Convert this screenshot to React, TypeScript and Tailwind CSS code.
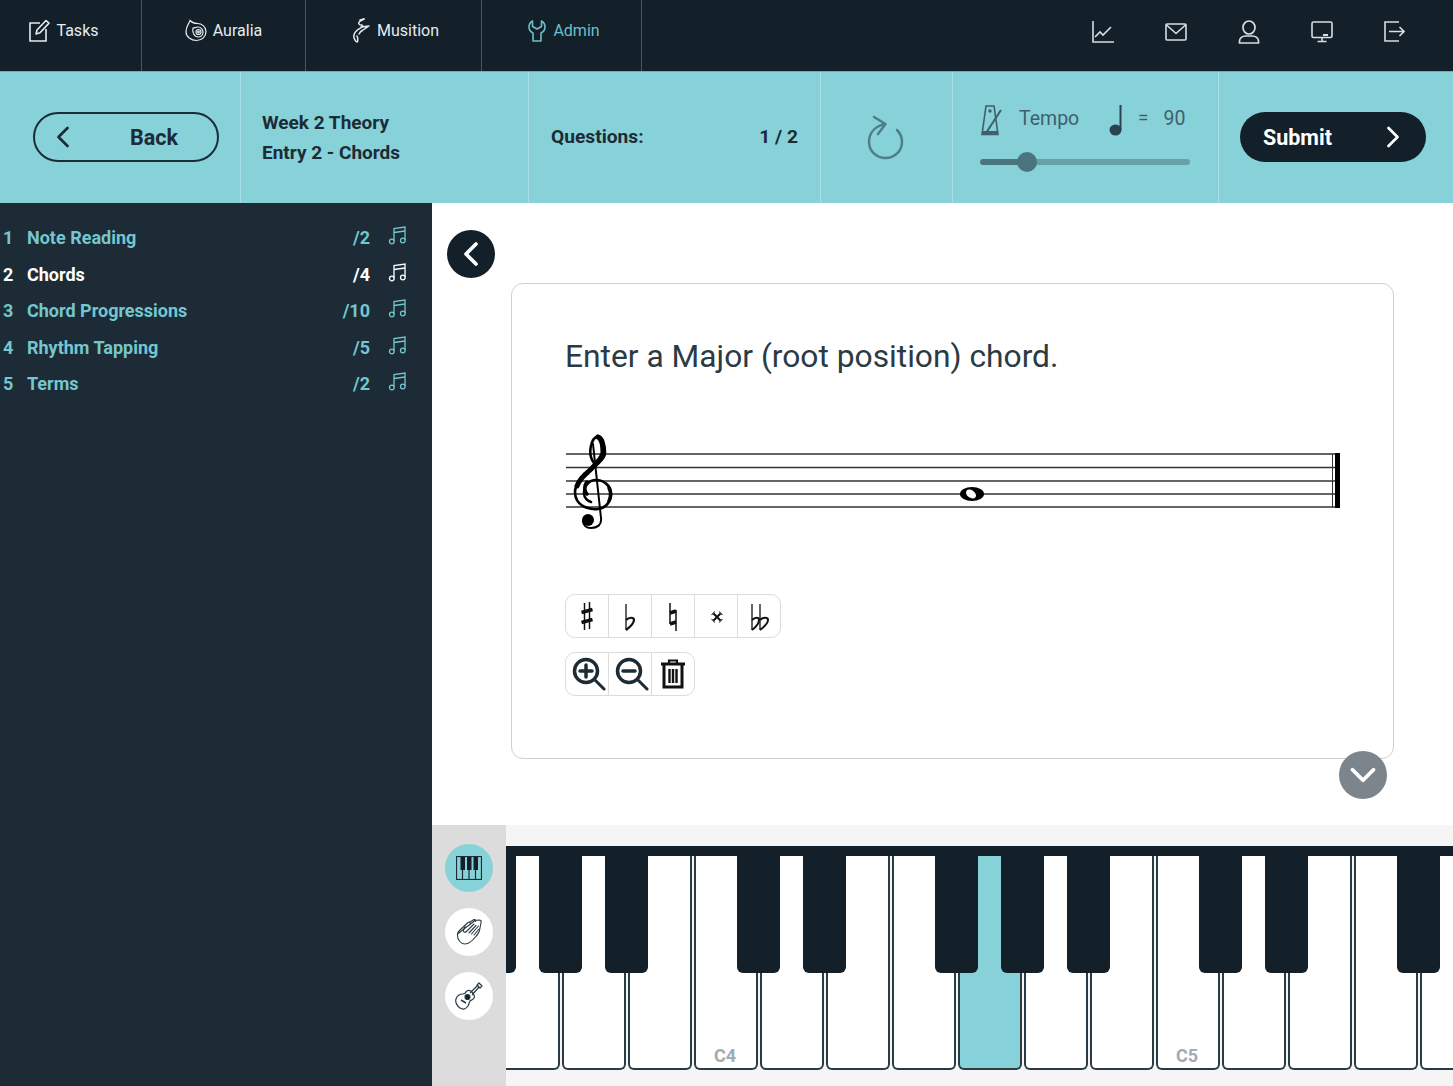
import { ChevronLeft, ChevronRight, ChevronDown } from 'lucide-react';

const navItems = [
  { label: 'Tasks', cell: 'w-[142px] pr-[14px]', gap: 'gap-[6px]', color: 'text-[#e6ecef]', icon: <TasksIcon /> },
  { label: 'Auralia', cell: 'w-[164px]', gap: 'gap-[6px]', color: 'text-[#e6ecef]', icon: <ShellIcon /> },
  { label: 'Musition', cell: 'w-[176px] pl-[4px]', gap: 'gap-[7px]', color: 'text-[#e6ecef]', icon: <FigureIcon /> },
  { label: 'Admin', cell: 'w-[160px] pl-[5px]', gap: 'gap-[7px]', color: 'text-[#6cc0ca]', icon: <WrenchIcon /> },
];

const sections = [
  { n: 1, name: 'Note Reading', score: '/2' },
  { n: 2, name: 'Chords', score: '/4', active: true },
  { n: 3, name: 'Chord Progressions', score: '/10' },
  { n: 4, name: 'Rhythm Tapping', score: '/5' },
  { n: 5, name: 'Terms', score: '/2' },
];

// white keys, starting off-screen to the left of the visible area
const keys = [
  { black: true }, { black: true }, { black: true }, {},
  { black: true, label: 'C4' }, { black: true }, {},
  { black: true }, { black: true, on: true }, { black: true }, {},
  { black: true, label: 'C5' }, { black: true }, {},
  { black: true }, { black: true },
];

function TasksIcon() {
  return (
    <svg width="22" height="23" viewBox="0 0 22 23" fill="none" stroke="currentColor" strokeWidth="1.6">
      <path d="M11 4H1v18h16V10" />
      <path d="M7 15l1-4 9-9.5 3 2.6-9 9.6z" strokeLinejoin="round" />
    </svg>
  );
}

function ShellIcon() {
  return (
    <svg width="22" height="23" viewBox="0 0 22 23" fill="none" stroke="currentColor" strokeWidth="1.2">
      <path d="M5 1.500C4.500 4 1 7 1 12.500 1 18 6 21.500 11.500 21.500 17 21.500 21 17.500 21 12.500 21 7.500 16.500 4.500 12.500 4.500 9.500 4.500 7 3.500 5 1.500z" />
      <path d="M8 9c-1 4 1 9 5.500 9 3 0 4.500-2.500 4.500-5s-2-5-5-5c-2 0-3.500 1-5 1z" />
      <circle cx="13.500" cy="13" r="2.500" />
      <circle cx="13.500" cy="13" r="0.800" />
    </svg>
  );
}

function FigureIcon() {
  return (
    <svg width="18" height="25" viewBox="0 0 18 25" fill="none" stroke="currentColor" strokeWidth="1.500" strokeLinecap="round" strokeLinejoin="round">
      <path d="M12 1C8 3 6 4 7 6c1 2 5 0 3 3-2 2-7 3-8 8-1 3 2 7 3 7 1 0 1-4 0-6" />
      <path d="M9 9l8-1-6 4c-2 1-3 2-4 4" />
      <path d="M12 1l-4 1" />
    </svg>
  );
}

function WrenchIcon() {
  return (
    <svg width="18" height="22" viewBox="0 0 18 22" fill="none" stroke="currentColor" strokeWidth="1.600" strokeLinejoin="round">
      <path d="M4.500 1C2 2.500 1 4.500 1 7c0 3 2 5 4 6v8h8v-8c2-1 4-3 4-6 0-2.500-1-4.500-3.500-6v5.500L9 9 4.500 6.500z" />
    </svg>
  );
}

function ChartIcon() {
  return (
    <svg width="22" height="22" viewBox="0 0 22 22" fill="none" stroke="currentColor" strokeWidth="1.600">
      <path d="M1 0v21h21" />
      <path d="M3 16l5-5 3 3 8-8" />
    </svg>
  );
}

function MailIcon() {
  return (
    <svg width="22" height="18" viewBox="0 0 22 18" fill="none" stroke="currentColor" strokeWidth="1.600" strokeLinejoin="round">
      <rect x="1" y="1" width="20" height="16" rx="1" />
      <path d="M1 1.500l10 9 10-9" />
    </svg>
  );
}

function UserIcon() {
  return (
    <svg width="22" height="24" viewBox="0 0 22 24" fill="none" stroke="currentColor" strokeWidth="1.700">
      <ellipse cx="11" cy="7.500" rx="6" ry="6.500" />
      <path d="M1.500 23v-2c0-3 3-5 6-5h7c3 0 6 2 6 5v2z" strokeLinejoin="round" />
    </svg>
  );
}

function MonitorIcon() {
  return (
    <svg width="22" height="22" viewBox="0 0 22 22" fill="none" stroke="currentColor" strokeWidth="1.600">
      <rect x="1" y="1" width="20" height="15.500" rx="1.500" />
      <path d="M11 16.500V20M6.500 20.500h9" />
      <path d="M12 14h5" strokeWidth="2" />
    </svg>
  );
}

function LogoutIcon() {
  return (
    <svg width="21" height="21" viewBox="0 0 21 21" fill="none" stroke="currentColor" strokeWidth="1.600">
      <path d="M15 1H1v19h14" />
      <path d="M5 10.500h15M15.500 6l4.500 4.500-4.500 4.500" />
    </svg>
  );
}

function MetronomeIcon() {
  return (
    <svg width="22" height="31" viewBox="0 0 22 31" fill="none" stroke="#3f5f6b" strokeWidth="1.600">
      <path d="M5 1h8l4 28.500H1z" strokeLinejoin="miter" />
      <path d="M5 28L20 5" strokeWidth="2" />
      <circle cx="9" cy="6" r="0.900" fill="#3f5f6b" />
      <path d="M2 27.500h14" strokeWidth="3" />
    </svg>
  );
}

function QuarterNote() {
  return (
    <svg width="14" height="31" viewBox="0 0 14 31" fill="#2b4350">
      <ellipse cx="6.500" cy="25" rx="6" ry="5.500" />
      <rect x="10.500" y="0" width="2" height="25" />
    </svg>
  );
}

function ReloadIcon() {
  return (
    <svg width="38" height="46" viewBox="0 0 38 46" fill="none" stroke="#4e7f88" strokeWidth="2.500" strokeLinecap="round" strokeLinejoin="round">
      <path d="M18 9C9 11 2 17 2 27c0 9 7.500 16 16.500 16S35 36 35 27c0-5-2-9-5-12" />
      <path d="M7 2l11.500 7L11 19" />
    </svg>
  );
}

function NotesIcon() {
  return (
    <svg width="18" height="19" viewBox="0 0 18 19" fill="none" stroke="currentColor" strokeWidth="1.300">
      <path d="M6 15V2.500L17 1v13" />
      <path d="M6 6.500l11-1.500" />
      <circle cx="3.800" cy="15.500" r="2.300" />
      <circle cx="14.800" cy="14.500" r="2.300" />
    </svg>
  );
}

function Staff() {
  return (
    <svg width="776" height="105" viewBox="0 0 776 105" fill="none" className="block">
      {[24, 37.5, 51, 64, 77].map((y) => (
        <line key={y} x1="1" x2="771" y1={y} y2={y} stroke="#333" strokeWidth="1.400" />
      ))}
      {/* treble clef */}
      <g stroke="#000" strokeLinecap="round">
        <path d="M29 33C22 24 26 8 33 6c5 0 7 10 7 17C40 34 10 46 10 62c0 14 14 18 23 17 9-1 13-9 13-15 0-9-8-14-15-14-7 0-12 6-12 13 0 5 4 8 7 9" strokeWidth="2.600" />
        <path d="M33 7c4 2 5 9 5 16-1 6-8 12-14 18M12 56c2-5 6-10 11-14" strokeWidth="5" />
        <path d="M44 58c2 4 2 9 0 13M22 52c-3 3-3 9 0 12" strokeWidth="3.500" />
        <path d="M28 14l8 74c1 7-4 10-10 10-5 0-8-3-8-7" strokeWidth="2" />
      </g>
      <circle cx="23" cy="90" r="6" fill="#000" />
      {/* whole note */}
      <ellipse cx="407" cy="64" rx="12" ry="7" fill="#000" />
      <ellipse cx="406" cy="64" rx="5.500" ry="3.800" fill="#fff" transform="rotate(35 406 64)" />
      {/* end barline */}
      <line x1="767.500" x2="767.500" y1="24" y2="77" stroke="#333" />
      <rect x="770" y="23" width="5" height="55" fill="#000" />
    </svg>
  );
}

function Sharp() {
  return (
    <svg width="14" height="30" viewBox="0 0 14 30" stroke="#111" fill="none">
      <path d="M4.500 2v27M9.500 1v27" strokeWidth="1.500" />
      <path d="M1.500 11.500l11-3M1.500 21.500l11-3" strokeWidth="3.500" />
    </svg>
  );
}

function Flat() {
  return (
    <svg width="12" height="28" viewBox="0 0 12 28" stroke="#111" fill="none" className="mt-[2px]">
      <path d="M2 1v26" strokeWidth="1.300" />
      <path d="M2 17c3-3 8-3 8 0 0 3-4 7-8 10" strokeWidth="2.200" />
    </svg>
  );
}

function Natural() {
  return (
    <svg width="10" height="30" viewBox="0 0 10 30" stroke="#111" fill="none" className="mt-[1px]">
      <path d="M2 1v21M8 8v21" strokeWidth="1.500" />
      <path d="M2 11l6-2M2 22l6-2" strokeWidth="3.500" />
    </svg>
  );
}

function DoubleSharp() {
  return (
    <svg width="14" height="14" viewBox="0 0 12 12" stroke="#111" fill="none" className="ml-[1px] mt-[2px]">
      <path d="M3 3l6 6M9 3l-6 6" strokeWidth="1.800" />
      <path d="M2.500 2.500l.5.500M9.500 2.500L9 3M2.500 9.500L3 9M9.500 9.500L9 9" strokeWidth="4" />
    </svg>
  );
}

function DoubleFlat() {
  return (
    <svg width="20" height="28" viewBox="0 0 20 28" stroke="#111" fill="none" className="ml-[2px] mt-[2px]">
      <path d="M2 1v26M10 1v26" strokeWidth="1.300" />
      <path d="M2 17c3-3 7-3 7 0 0 3-3 7-7 10M10 17c3-3 8-3 8 0 0 3-4 7-8 10" strokeWidth="2" />
    </svg>
  );
}

function ZoomInIcon({ minus }: { minus?: boolean }) {
  return (
    <svg width="34" height="34" viewBox="0 0 34 34" fill="none" stroke="#1c2b35" strokeLinecap="round" className="ml-[3px]">
      <circle cx="14" cy="14" r="11.500" strokeWidth="3.500" />
      <path d="M8 14h12" strokeWidth="3.500" />
      {!minus && <path d="M14 8v12" strokeWidth="3.500" />}
      <path d="M23 23l9 9" strokeWidth="3" />
    </svg>
  );
}

function TrashIcon() {
  return (
    <svg width="24" height="30" viewBox="0 0 24 30" fill="none" stroke="#111">
      <path d="M8 4V1.500h8V4" strokeWidth="2.200" />
      <path d="M0 5h24" strokeWidth="3" />
      <path d="M3 6v22h18V6" strokeWidth="3" />
      <path d="M8.500 10v14M12 10v14M15.500 10v14" strokeWidth="2.400" />
    </svg>
  );
}

function PianoIcon() {
  return (
    <svg width="26" height="24" viewBox="0 0 26 24" fill="none" stroke="#1c2b35">
      <rect x="0.500" y="0.500" width="25" height="23" strokeWidth="1.200" />
      <path d="M6.500 14v9M13 14v9M19.500 14v9" strokeWidth="1.200" />
      <path d="M4.500 1H9v13H4.500zM11 1h4.500v13H11zM17.500 1H22v13h-4.500z" fill="#131f29" stroke="none" />
    </svg>
  );
}

function HandsIcon() {
  return (
    <svg width="26" height="26" viewBox="0 0 26 26" fill="none" stroke="#2b3b44" strokeWidth="1.100" strokeLinejoin="round" strokeLinecap="round">
      <path d="M1.500 15c0-2 1.500-3 3-4.500L12 3.500c1.500-1 3 .500 2 2M14 3l4-2.500c1.500 0 2 1 1.500 2M19 1.500l4-.5c2 0 2.500 1 2 2.500l-1.500 8c-.5 2-2 4-4 6.500-2.500 3-6 7-10.500 7C5 25 1 21 1.500 15z" />
      <path d="M9 7.500l-1.500 3.500c-.5 2 1 3 2.500 1.500M10 13L18 5M13 14l7-7.500M15.500 15L22.500 7M18 16l5-6" />
    </svg>
  );
}

function GuitarIcon() {
  return (
    <svg width="28" height="28" viewBox="0 0 28 28" fill="none" stroke="#2b3b44" strokeWidth="1.200" strokeLinejoin="round">
      <path d="M16 9c-2-1-4-1-5 1-1 1-1 2-3 2-3 0-6 2-7 5-1 3 1 7 4 9 3 2 6 1 8-2 1-2 1-3 2-5 1-1 3-1 4-3 1-1 0-4-3-7z" />
      <path d="M15 11L23 3M17 13l7-8" />
      <path d="M22 3l2-2 3 3-2 2z" />
      <circle cx="12.500" cy="15" r="2.500" fill="#131f29" />
      <path d="M6 18l5 3" strokeWidth="1.500" />
    </svg>
  );
}

export default function App() {
  return (
    <div className="flex h-[1086px] w-full flex-col overflow-hidden bg-white font-[Roboto,sans-serif]">
      {/* Top nav */}
      <nav className="flex h-[71px] shrink-0 items-center justify-between bg-[#131f29]">
        <div className="flex h-full">
          {navItems.map((item) => (
            <div key={item.label} className={`flex h-full items-center justify-center border-r border-[#4a565f] pb-[10px] ${item.gap} ${item.cell} ${item.color}`}>
              {item.icon}
              <span className="text-[16px] leading-none">{item.label}</span>
            </div>
          ))}
        </div>
        <div className="mb-[8px] mr-[22px] flex text-[#d8dee1]">
          <div className="flex h-[30px] w-[73px] items-center justify-center"><ChartIcon /></div>
          <div className="flex h-[30px] w-[73px] items-center justify-center"><MailIcon /></div>
          <div className="flex h-[30px] w-[73px] items-center justify-center"><UserIcon /></div>
          <div className="flex h-[30px] w-[73px] items-center justify-center"><MonitorIcon /></div>
          <div className="flex h-[30px] w-[73px] items-center justify-center"><LogoutIcon /></div>
        </div>
      </nav>

      {/* Quiz header */}
      <header className="flex h-[132px] shrink-0 border-t border-[#6aaeb8] bg-[#87d1d8] text-[#1c2b35]">
        <div className="flex w-[241px] items-center border-r border-[#a8e0e5] pb-[2px] pl-[33px]">
          <button className="flex h-[50px] w-[186px] items-center rounded-full border-2 border-[#1c2b35] pl-[10px]">
            <ChevronLeft size={36} strokeWidth={1.800} />
            <span className="ml-[49px] pt-[3px] text-[21.500px] font-bold">Back</span>
          </button>
        </div>
        <div className="flex w-[288px] flex-col justify-center border-r border-[#a8e0e5] pl-[21px] text-[19px] font-bold leading-[30px]">
          <div>Week 2 Theory</div>
          <div>Entry 2 - Chords</div>
        </div>
        <div className="flex w-[292px] items-center justify-between border-r border-[#a8e0e5] pl-[22px] pr-[22px] text-[19.200px] font-bold">
          <span>Questions:</span>
          <span>1 / 2</span>
        </div>
        <div className="flex w-[132px] items-center justify-center border-r border-[#a8e0e5] pr-[2px]">
          <ReloadIcon />
        </div>
        <div className="flex w-[266px] flex-col border-r border-[#a8e0e5] pl-[28px] pt-[32px]">
          <div className="flex h-[32px] items-center text-[19.500px] text-[#3f5f6b]">
            <MetronomeIcon />
            <span className="-mt-[3px] ml-[16px] w-[59px]">Tempo</span>
            <span className="ml-[31px]"><QuarterNote /></span>
            <span className="-mt-[3px] ml-[15px] text-[19px]">=</span>
            <span className="-mt-[3px] ml-[15px]">90</span>
          </div>
          <div className="relative -ml-[1px] mt-[20px] flex h-[12px] w-[210px] items-center">
            <div className="h-[6px] w-[38px] rounded-l-full bg-[#4a757f]" />
            <div className="ml-[12px] h-[6px] flex-1 rounded-r-full bg-[#66a0a9]" />
            <div className="absolute left-[37px] top-[-4px] h-[20px] w-[20px] rounded-full bg-[#4a757f]" />
          </div>
        </div>
        <div className="flex flex-1 items-center pb-[2px] pl-[21px]">
          <button className="flex h-[50px] w-[186px] items-center justify-between rounded-full bg-[#131f29] pl-[23px] pr-[15px] text-white">
            <span className="pt-[3px] text-[21.500px] font-bold">Submit</span>
            <ChevronRight size={36} strokeWidth={1.800} />
          </button>
        </div>
      </header>

      <div className="flex min-h-0 flex-1">
        {/* Section list */}
        <aside className="w-[432px] shrink-0 bg-[#1c2b35] pt-[16.500px]">
          {sections.map((s) => (
            <div key={s.n} className={`flex h-[36.500px] items-center pl-[3px] pr-[26px] text-[18px] font-bold ${s.active ? 'text-white' : 'text-[#74c6cf]'}`}>
              <span className="w-[24px]">{s.n}</span>
              <span className="flex-1">{s.name}</span>
              <span>{s.score}</span>
              <span className="-mt-[4px] ml-[18px]"><NotesIcon /></span>
            </div>
          ))}
        </aside>

        <div className="flex min-w-0 flex-1 flex-col">
          {/* Question */}
          <main className="h-[622px] shrink-0 pl-[15px] pt-[27px]">
            <button className="flex h-12 w-12 items-center justify-center rounded-full bg-[#131f29] text-white">
              <ChevronLeft size={40} strokeWidth={2.200} />
            </button>
            <section className="relative ml-[64px] mt-[5px] h-[475.500px] w-[883px] rounded-[12px] border border-[#cfcfcf] pl-[53px] pt-[53px]">
              <h1 className="text-[31.750px] font-normal leading-[40px] text-[#2b3b44]">Enter a Major (root position) chord.</h1>
              <div className="mt-[53px]"><Staff /></div>
              <div className="mt-[59px] flex h-[44px] w-[216px] rounded-[10px] border border-[#dcdcdc]">
                <div className="flex w-[43px] items-center justify-center border-r border-[#dcdcdc]"><Sharp /></div>
                <div className="flex w-[43px] items-center justify-center border-r border-[#dcdcdc]"><Flat /></div>
                <div className="flex w-[43px] items-center justify-center border-r border-[#dcdcdc]"><Natural /></div>
                <div className="flex w-[43px] items-center justify-center border-r border-[#dcdcdc]"><DoubleSharp /></div>
                <div className="flex flex-1 items-center justify-center"><DoubleFlat /></div>
              </div>
              <div className="mt-[14px] flex h-[44px] w-[130px] rounded-[10px] border border-[#dcdcdc]">
                <div className="flex w-[43px] items-center justify-center border-r border-[#dcdcdc]"><ZoomInIcon /></div>
                <div className="flex w-[43px] items-center justify-center border-r border-[#dcdcdc]"><ZoomInIcon minus /></div>
                <div className="flex flex-1 items-center justify-center"><TrashIcon /></div>
              </div>
              <button className="absolute -bottom-[41px] right-[6px] flex h-12 w-12 items-center justify-center rounded-full bg-[#7c858b] text-white">
                <ChevronDown size={42} strokeWidth={2.200} />
              </button>
            </section>
          </main>

          {/* Keyboard */}
          <div className="flex min-h-0 flex-1">
            <div className="flex w-[74px] shrink-0 flex-col items-center gap-4 bg-[#dcdcdc] pt-[19px]">
              <div className="flex h-12 w-12 items-center justify-center rounded-full bg-[#87d1d8]"><PianoIcon /></div>
              <div className="flex h-12 w-12 items-center justify-center rounded-full bg-white"><HandsIcon /></div>
              <div className="flex h-12 w-12 items-center justify-center rounded-full bg-white"><GuitarIcon /></div>
            </div>
            <div className="min-w-0 flex-1 bg-[#f5f5f5] pt-[21px]">
              <div className="h-[224px] overflow-hidden">
                <div className="h-[10px] bg-[#131f29]" />
                <div className="-ml-[76px] flex h-[214px] w-[1100px] gap-[2px]">
                  {keys.map((k, i) => (
                    <div key={i} className={`relative flex h-full w-[64px] shrink-0 items-end justify-center rounded-b-[6px] border-x-2 border-b-2 border-[#2b3b44] pb-[1px] ${k.on ? 'bg-[#87d1d8]' : 'bg-white'}`}>
                      {k.label && <span className="-ml-[2px] text-[18px] font-bold leading-[22px] text-[#a0acb3]">{k.label}</span>}
                      {k.black && <div className="absolute left-[41px] top-0 z-10 h-[117px] w-[43px] rounded-b-[6px] bg-[#131f29]" />}
                    </div>
                  ))}
                </div>
              </div>
            </div>
          </div>
        </div>
      </div>
    </div>
  );
}
